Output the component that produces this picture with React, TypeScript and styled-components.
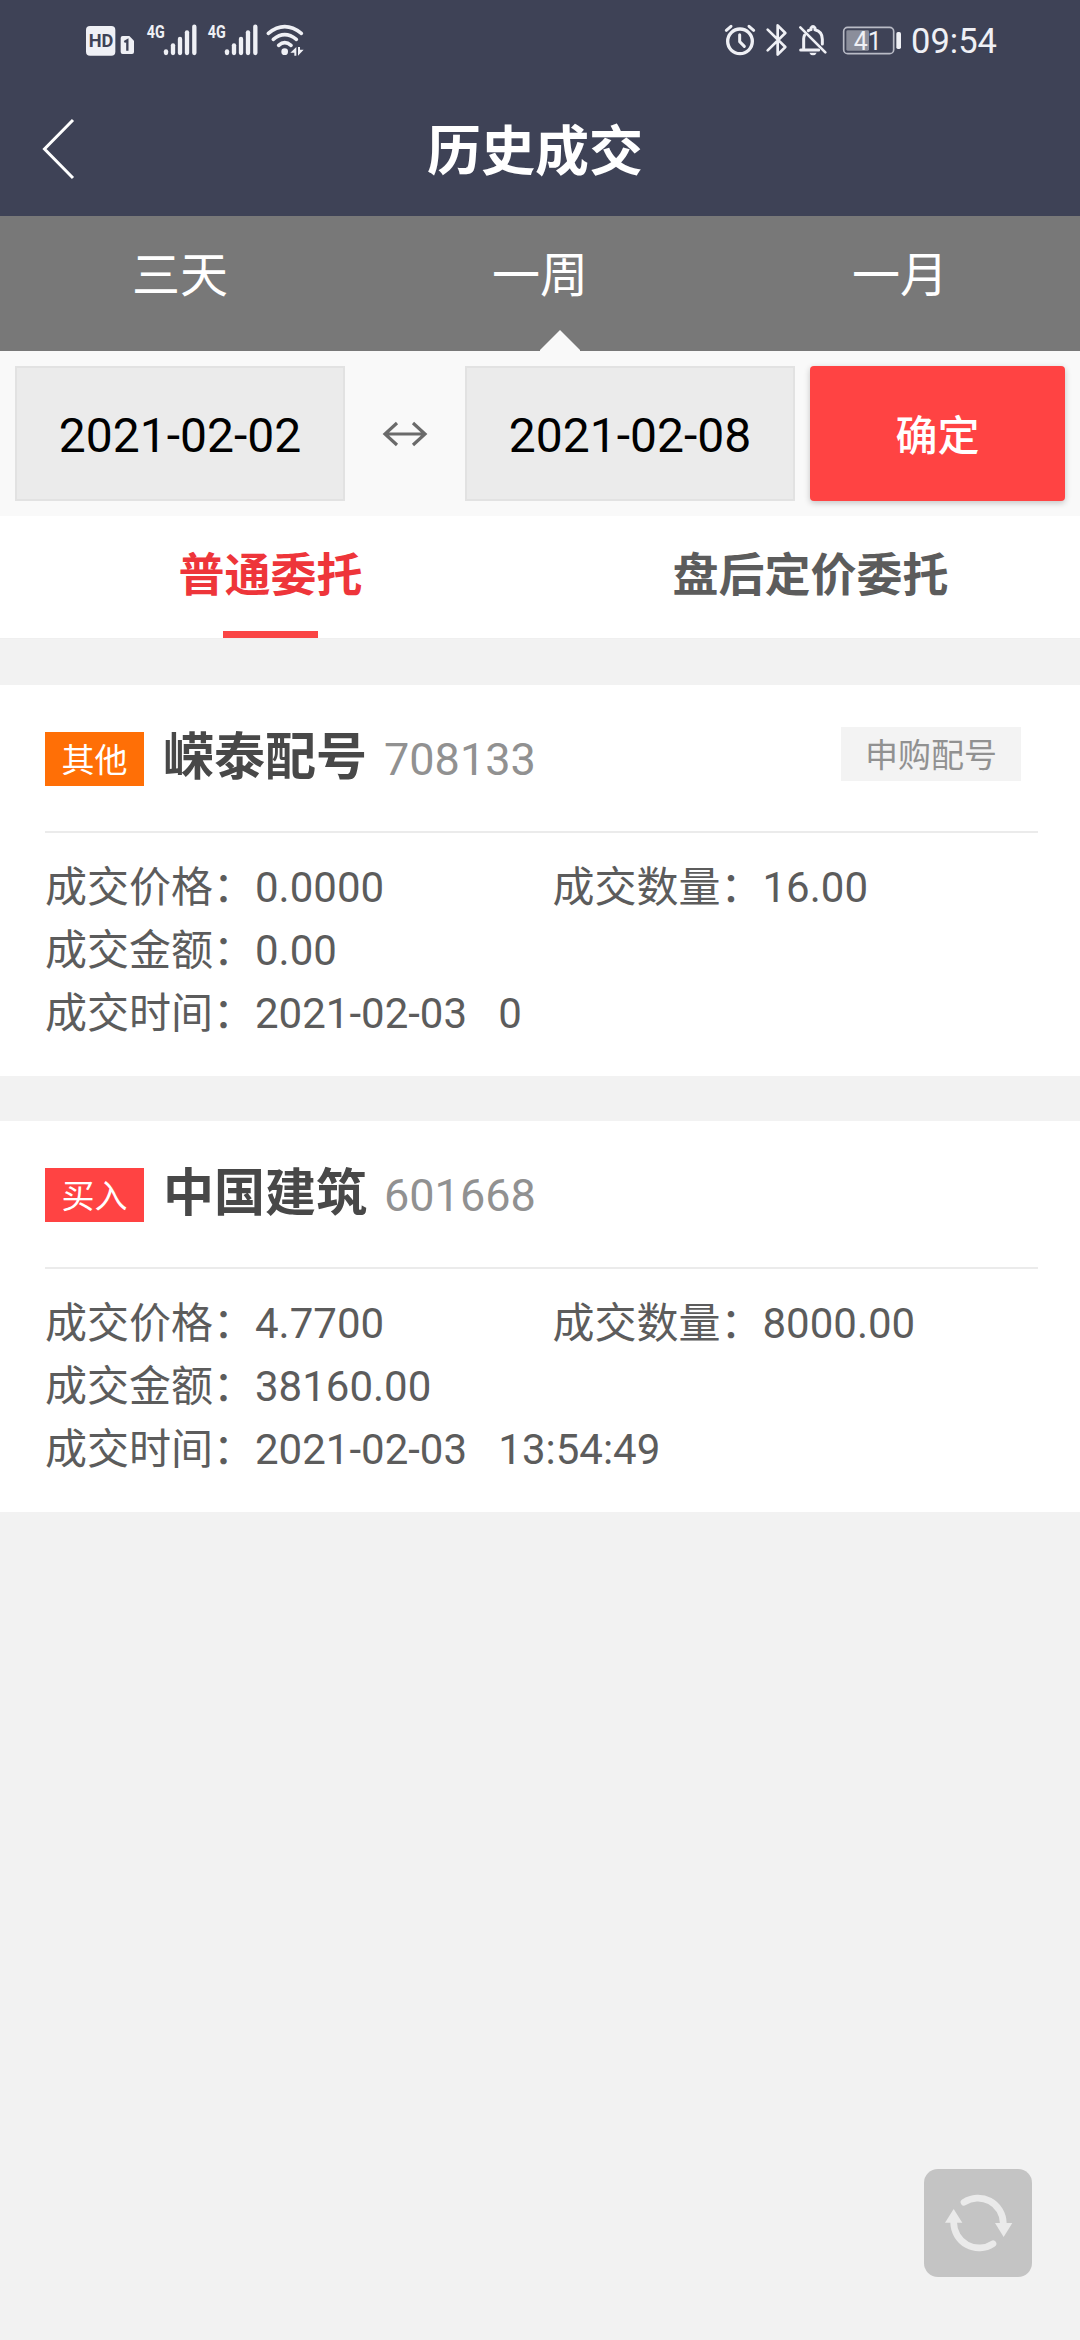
import React from "react";
import styled, { createGlobalStyle } from "styled-components";

const GlobalStyle = createGlobalStyle`
  * { box-sizing: border-box; }
  body {
    margin: 0;
    background: #f2f2f2;
    font-family: Roboto, "Noto Sans CJK SC", sans-serif;
  }
  button { font-family: inherit; border: 0; padding: 0; }
`;

const Screen = styled.div`
  width: 1080px;
  height: 2340px;
  display: flex;
  flex-direction: column;
  background: #f2f2f2;
  overflow: hidden;
`;

const Icon = styled.svg`
  display: block;
  flex: none;
`;

const StatusBar = styled.div`
  height: 81px;
  flex: none;
  display: flex;
  justify-content: space-between;
  align-items: flex-start;
  padding: 0 83px 0 70px;
  background: #3e4256;
`;

const StatusSide = styled.div`
  display: flex;
`;

const Clock = styled.span`
  font-size: 34.5px;
  line-height: 40px;
  margin-top: 21px;
  color: #eff0f5;
`;

const TitleBar = styled.header`
  height: 135px;
  flex: none;
  display: grid;
  grid-template-columns: 110px 1fr 120px;
  align-items: center;
  background: #3e4256;
`;

const BackButton = styled.button`
  height: 135px;
  padding-left: 40px;
  background: none;
  display: flex;
  align-items: center;
`;

const Title = styled.h1`
  margin: 0;
  padding-top: 9px;
  text-align: center;
  font-size: 54px;
  line-height: 80px;
  font-weight: 700;
  color: #fff;
`;

const RangeTabs = styled.nav`
  height: 135px;
  flex: none;
  display: grid;
  grid-template-columns: repeat(3, 1fr);
  background: #787878;
`;

const RangeTab = styled.div`
  position: relative;
  text-align: center;
  font-size: 48px;
  line-height: 120px;
  color: #fff;
`;

const Pointer = styled.span`
  position: absolute;
  bottom: 0;
  left: 180px;
  width: 40px;
  height: 21px;
  background: #f9f9f9;
  clip-path: polygon(50% 0, 100% 95%, 100% 100%, 0 100%, 0 95%);
`;

const DateRow = styled.div`
  height: 165px;
  flex: none;
  display: flex;
  padding: 15px;
  background: #f9f9f9;
`;

const DateBox = styled.div`
  width: 330px;
  height: 135px;
  border: 2px solid #e2e2e2;
  background: #ebebeb;
  text-align: center;
  font-size: 48px;
  line-height: 135px;
  color: #000;
`;

const Swap = styled.div`
  width: 120px;
  display: flex;
  align-items: center;
  justify-content: center;
`;

const ConfirmButton = styled.button`
  width: 255px;
  height: 135px;
  margin-left: 15px;
  padding-top: 6px;
  border-radius: 4px;
  background: #ff4343;
  box-shadow: 0 2px 6px rgba(0, 0, 0, 0.22);
  font-size: 42px;
  font-weight: 500;
  line-height: 129px;
  color: #fff;
`;

const KindTabs = styled.nav`
  height: 123px;
  flex: none;
  display: grid;
  grid-template-columns: 1fr 1fr;
  background: #fff;
  border-bottom: 1px solid #efefef;
`;

const KindTab = styled.div<{ $active?: boolean }>`
  display: flex;
  flex-direction: column;
  justify-content: space-between;
  align-items: center;
  font-size: 46px;
  font-weight: 700;
  line-height: 118px;
  color: ${(p) => (p.$active ? "#ee353a" : "#5c5c5c")};
`;

const KindLabel = styled.span`
  height: 115px;
  padding-left: 1px;
`;

const Underline = styled.span`
  width: 95px;
  height: 7px;
  flex: none;
  background: #fa4545;
`;

const List = styled.main`
  display: flex;
  flex-direction: column;
  gap: 45px;
  padding-top: 46px;
`;

const Card = styled.article`
  height: 391px;
  padding-left: 45px;
  background: #fff;
`;

const CardHead = styled.div`
  width: 993px;
  height: 148px;
  display: flex;
  align-items: flex-start;
  padding: 42px 17px 0 0;
  border-bottom: 2px solid #ebebeb;
`;

const Badge = styled.span<{ $color: string }>`
  width: 99px;
  height: 54px;
  margin-top: 5px;
  background: ${(p) => p.$color};
  color: #fff;
  text-align: center;
  font-size: 33px;
  line-height: 57px;
`;

const Name = styled.h2`
  margin: 0 0 0 19px;
  font-size: 51px;
  font-weight: 700;
  line-height: 61px;
  color: #484848;
`;

const Code = styled.span`
  margin: 3px 0 0 17px;
  font-size: 45px;
  line-height: 60px;
  color: #919191;
`;

const Remark = styled.span`
  height: 54px;
  margin-left: auto;
  padding: 0 24px;
  background: #f3f3f3;
  color: #919191;
  font-size: 33px;
  line-height: 58px;
`;

const Details = styled.div`
  display: grid;
  grid-template-columns: 507.5px 1fr;
  padding-top: 23px;
`;

const Detail = styled.div<{ $wide?: boolean }>`
  grid-column: ${(p) => (p.$wide ? "1 / -1" : "auto")};
  white-space: pre;
  font-size: 42px;
  line-height: 63px;
  color: #5c5c5c;
`;

const RefreshButton = styled.button`
  width: 108px;
  height: 108px;
  flex: none;
  margin: auto 48px 63px auto;
  border-radius: 14px;
  background: #c4c4c4;
`;

const ink = "#eff0f5";

const Signal = ({ x }: { x: number }) => (
  <g transform={`translate(${x} 0)`}>
    <text x="0" y="114" fontSize="55" fontWeight="700" textLength="54" lengthAdjust="spacingAndGlyphs" fill={ink}>
      4G
    </text>
    <g stroke={ink} strokeWidth="13" strokeLinecap="round">
      <path d="M58 154V159" />
      <path d="M79 136V159" />
      <path d="M100 117V159" />
      <path d="M121 97V159" />
      <path d="M143 80V159" />
    </g>
  </g>
);

const NetworkIcons = () => (
  <Icon width="260" height="80" viewBox="0 0 780 240" fill="none">
    <rect x="48" y="78" width="88" height="89" rx="12" fill={ink} />
    <text x="56" y="142" fontSize="54" fontWeight="700" textLength="74" lengthAdjust="spacingAndGlyphs" fill="#3e4256">
      HD
    </text>
    <path d="M158 108H178L192 122V156Q192 162 186 162H158Q152 162 152 156V114Q152 108 158 108Z" fill={ink} />
    <path d="M163 126L172 121V152" stroke="#3e4256" strokeWidth="7" />
    <Signal x={230} />
    <Signal x={413} />
    <g stroke={ink} strokeWidth="11" strokeLinecap="round">
      <path d="M595 100Q644 60 694 100" />
      <path d="M610 118Q644 90 679 118" />
      <path d="M626 136Q644 120 663 136" />
    </g>
    <circle cx="644" cy="155" r="10" fill={ink} />
    <path d="M679 141V167H673V158H661Z" fill={ink} />
    <path d="M684 167V141H690V149H701Z" fill={ink} />
  </Icon>
);

const DeviceIcons = () => (
  <Icon width="211" height="80" viewBox="0 0 633 240" fill="none">
    <g stroke={ink} strokeLinecap="round" strokeLinejoin="round">
      <circle cx="120" cy="124" r="37" strokeWidth="10" />
      <path d="M119 104V125L133 139" strokeWidth="9" />
      <path d="M79 91L93 79M147 79L161 91" strokeWidth="9" />
      <path d="M203 89L256 141L233 164V76L256 99L203 151" strokeWidth="8" />
      <path d="M301 82L376 157" strokeWidth="8" />
      <path d="M302 150H356M311 148V116Q311 110 314 105" strokeWidth="9" />
      <path d="M325 92Q329 90 333 89V84Q339 75 345 84V89Q367 94 367 118V132" strokeWidth="9" />
    </g>
    <path d="M328 158H350Q347 166 339 166Q331 166 328 158Z" fill={ink} />
    <rect x="439" y="91" width="68" height="61" rx="4" fill="#8b8e9b" />
    <rect x="431" y="82" width="150" height="79" rx="12" stroke="#b9bbc6" strokeWidth="5" />
    <rect x="589" y="96" width="14" height="51" rx="5" fill={ink} />
    <text x="461" y="149" fontSize="76" textLength="84" lengthAdjust="spacingAndGlyphs" fill={ink}>
      41
    </text>
  </Icon>
);

type Trade = {
  kind: string;
  color: string;
  name: string;
  code: string;
  remark?: string;
  price: string;
  quantity: string;
  amount: string;
  time: string;
};

const trades: Trade[] = [
  {
    kind: "其他",
    color: "#ff6f06",
    name: "嵘泰配号",
    code: "708133",
    remark: "申购配号",
    price: "0.0000",
    quantity: "16.00",
    amount: "0.00",
    time: "2021-02-03   0",
  },
  {
    kind: "买入",
    color: "#ff4343",
    name: "中国建筑",
    code: "601668",
    price: "4.7700",
    quantity: "8000.00",
    amount: "38160.00",
    time: "2021-02-03   13:54:49",
  },
];

export default function App() {
  return (
    <Screen>
      <GlobalStyle />
      <StatusBar>
        <StatusSide>
          <NetworkIcons />
        </StatusSide>
        <StatusSide>
          <DeviceIcons />
          <Clock>09:54</Clock>
        </StatusSide>
      </StatusBar>
      <TitleBar>
        <BackButton aria-label="返回">
          <Icon width="36" height="64" viewBox="0 0 36 64" fill="none">
            <path d="M33 3L4.5 32L33 61" stroke="#fff" strokeWidth="3" />
          </Icon>
        </BackButton>
        <Title>历史成交</Title>
      </TitleBar>
      <RangeTabs>
        <RangeTab>三天</RangeTab>
        <RangeTab>
          一周
          <Pointer />
        </RangeTab>
        <RangeTab>一月</RangeTab>
      </RangeTabs>
      <DateRow>
        <DateBox>2021-02-02</DateBox>
        <Swap>
          <Icon width="46" height="26" viewBox="0 0 46 26" fill="none">
            <path d="M3 13H43M15 2L3 13L15 24M31 2L43 13L31 24" stroke="#6a6a6a" strokeWidth="3.2" />
          </Icon>
        </Swap>
        <DateBox>2021-02-08</DateBox>
        <ConfirmButton>确定</ConfirmButton>
      </DateRow>
      <KindTabs>
        <KindTab $active>
          <KindLabel>普通委托</KindLabel>
          <Underline />
        </KindTab>
        <KindTab>
          <KindLabel>盘后定价委托</KindLabel>
        </KindTab>
      </KindTabs>
      <List>
        {trades.map((t) => (
          <Card key={t.code}>
            <CardHead>
              <Badge $color={t.color}>{t.kind}</Badge>
              <Name>{t.name}</Name>
              <Code>{t.code}</Code>
              {t.remark && <Remark>{t.remark}</Remark>}
            </CardHead>
            <Details>
              <Detail>成交价格：{t.price}</Detail>
              <Detail>成交数量：{t.quantity}</Detail>
              <Detail $wide>成交金额：{t.amount}</Detail>
              <Detail $wide>成交时间：{t.time}</Detail>
            </Details>
          </Card>
        ))}
      </List>
      <RefreshButton aria-label="刷新">
        <Icon width="108" height="108" viewBox="72 87 324 324" fill="none">
          <path d="M192 187A76 77 0 0 1 310 250" stroke="#eaeaea" strokeWidth="20" strokeLinecap="round" />
          <path d="M279 311A76 77 0 0 1 161 247" stroke="#eaeaea" strokeWidth="20" strokeLinecap="round" />
          <path d="M285 249H337L311 291Z" fill="#eaeaea" />
          <path d="M135 248H187L161 207Z" fill="#eaeaea" />
        </Icon>
      </RefreshButton>
    </Screen>
  );
}
